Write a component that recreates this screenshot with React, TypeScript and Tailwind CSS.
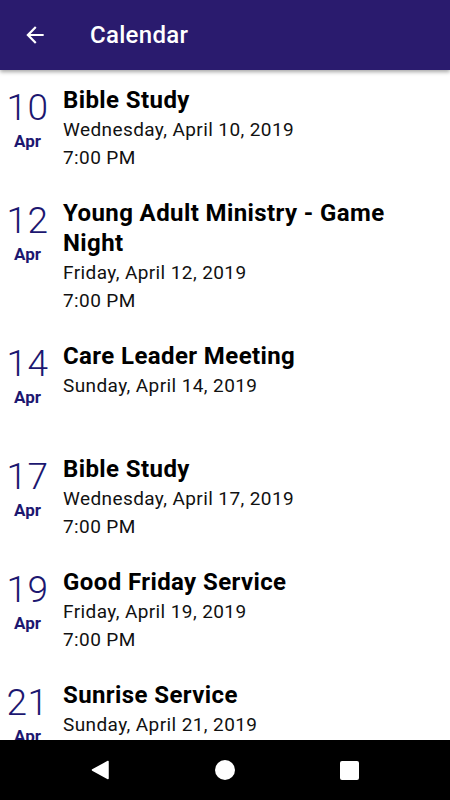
import React from "react";

const events = [
  { d: "10", title: "Bible Study", date: "Wednesday, April 10, 2019", time: "7:00 PM" },
  { d: "12", title: "Young Adult Ministry - Game Night", date: "Friday, April 12, 2019", time: "7:00 PM" },
  { d: "14", title: "Care Leader Meeting", date: "Sunday, April 14, 2019", time: "" },
  { d: "17", title: "Bible Study", date: "Wednesday, April 17, 2019", time: "7:00 PM" },
  { d: "19", title: "Good Friday Service", date: "Friday, April 19, 2019", time: "7:00 PM" },
  { d: "21", title: "Sunrise Service", date: "Sunday, April 21, 2019", time: "" },
];

export default function App() {
  return (
    <div
      className="w-[450px] h-[800px] flex flex-col bg-white overflow-hidden"
      style={{ fontFamily: "Roboto, 'Noto Sans', sans-serif" }}
    >
      <div className="h-[70px] shrink-0 bg-[#2a1b6e] flex items-center shadow-[0_2px_4px_rgba(0,0,0,0.35)] z-10 relative">
        <div className="w-[70px] flex items-center justify-center">
          <svg width="26" height="26" viewBox="0 0 24 24" fill="white">
            <path d="M20 11H7.83l5.59-5.59L12 4l-8 8 8 8 1.41-1.41L7.83 13H20v-2z" />
          </svg>
        </div>
        <div className="text-white text-[24px] font-medium ml-[20px] tracking-[0.3px]">Calendar</div>
      </div>
      <div className="flex-1 overflow-hidden">
        {events.map((e, i) => (
          <div key={i} className="flex pt-[15px] pb-[12px]">
            <div className="w-[55px] shrink-0 flex flex-col items-center text-[#1c1770]">
              <div className="text-[37px] font-light leading-[37px] mt-[4px] tracking-[0.5px]">{e.d}</div>
              <div className="text-[17px] font-bold leading-[20px] mt-[5px]">Apr</div>
            </div>
            <div className="ml-[8px] pr-[30px] flex-1">
              <div className="text-[24px] font-bold leading-[30px] text-black tracking-[0.4px]">{e.title}</div>
              <div className="text-[19px] leading-[28px] mt-[1px] text-[#111] tracking-[0.4px]">{e.date}</div>
              <div className="text-[19px] leading-[27px] text-[#111] h-[27px] tracking-[0.4px]">{e.time}</div>
            </div>
          </div>
        ))}
      </div>
      <div className="h-[60px] shrink-0 bg-black grid grid-cols-3 items-center pl-[37px] pr-[38px]">
        <div className="flex justify-center">
          <svg width="20" height="20" viewBox="0 0 20 20">
            <path d="M18 1.5 L2.5 10 L18 18.5 Z" fill="white" stroke="white" strokeWidth="1.5" strokeLinejoin="round" />
          </svg>
        </div>
        <div className="flex justify-center">
          <div className="w-[20px] h-[20px] rounded-full bg-white" />
        </div>
        <div className="flex justify-center">
          <div className="w-[19px] h-[19px] rounded-[2px] bg-white" />
        </div>
      </div>
    </div>
  );
}
